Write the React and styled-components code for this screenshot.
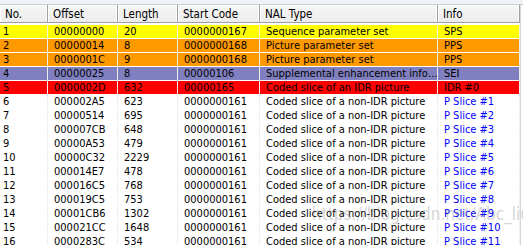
import React from 'react';
import styled, { createGlobalStyle } from 'styled-components';

const GlobalStyle = createGlobalStyle`
  html, body {
    margin: 0;
    padding: 0;
    background: #ffffff;
    overflow: hidden;
  }
  body {
    font-family: "DejaVu Sans Condensed", "Liberation Sans", Arial, sans-serif;
    font-size: 11px;
  }
`;

const columns = [
  { key: 'no', label: 'No.', width: 48 },
  { key: 'offset', label: 'Offset', width: 70 },
  { key: 'length', label: 'Length', width: 60 },
  { key: 'start', label: 'Start Code', width: 82 },
  { key: 'type', label: 'NAL Type', width: 178 },
  { key: 'info', label: 'Info', width: 82 },
];

const SLICE = 'Coded slice of a non-IDR picture';

const nalUnits = [
  { no: 1, offset: '00000000', length: 20, start: '0000000167', type: 'Sequence parameter set', info: 'SPS', tone: 'sps' },
  { no: 2, offset: '00000014', length: 8, start: '0000000168', type: 'Picture parameter set', info: 'PPS', tone: 'pps' },
  { no: 3, offset: '0000001C', length: 9, start: '0000000168', type: 'Picture parameter set', info: 'PPS', tone: 'pps' },
  { no: 4, offset: '00000025', length: 8, start: '00000106', type: 'Supplemental enhancement info…', info: 'SEI', tone: 'sei' },
  { no: 5, offset: '0000002D', length: 632, start: '00000165', type: 'Coded slice of an IDR picture', info: 'IDR #0', tone: 'idr' },
  { no: 6, offset: '000002A5', length: 623, start: '0000000161', type: SLICE, info: 'P Slice #1', tone: 'slice' },
  { no: 7, offset: '00000514', length: 695, start: '0000000161', type: SLICE, info: 'P Slice #2', tone: 'slice' },
  { no: 8, offset: '000007CB', length: 648, start: '0000000161', type: SLICE, info: 'P Slice #3', tone: 'slice' },
  { no: 9, offset: '00000A53', length: 479, start: '0000000161', type: SLICE, info: 'P Slice #4', tone: 'slice' },
  { no: 10, offset: '00000C32', length: 2229, start: '0000000161', type: SLICE, info: 'P Slice #5', tone: 'slice' },
  { no: 11, offset: '000014E7', length: 478, start: '0000000161', type: SLICE, info: 'P Slice #6', tone: 'slice' },
  { no: 12, offset: '000016C5', length: 768, start: '0000000161', type: SLICE, info: 'P Slice #7', tone: 'slice' },
  { no: 13, offset: '000019C5', length: 753, start: '0000000161', type: SLICE, info: 'P Slice #8', tone: 'slice' },
  { no: 14, offset: '00001CB6', length: 1302, start: '0000000161', type: SLICE, info: 'P Slice #9', tone: 'slice' },
  { no: 15, offset: '000021CC', length: 1648, start: '0000000161', type: SLICE, info: 'P Slice #10', tone: 'slice' },
  { no: 16, offset: '0000283C', length: 534, start: '0000000161', type: SLICE, info: 'P Slice #11', tone: 'slice' },
];

const toneColors = {
  sps: '#ffff00',
  pps: '#ff9900',
  sei: '#8080c0',
  idr: '#ff0000',
  slice: '#ffffff',
};

const gridTemplate = columns.map(c => `${c.width}px`).join(' ');

const App = () => (
  <>
    <GlobalStyle />
    <Window>
      <TitleStrip />
      <ListView>
        <HeaderRow>
          {columns.map(col => (
            <HeaderCell key={col.key}>{col.label}</HeaderCell>
          ))}
        </HeaderRow>
        <Body>
          {nalUnits.map(unit => (
            <Row key={unit.no} $bg={toneColors[unit.tone]}>
              {columns.map(col => (
                <Cell key={col.key} $blue={col.key === 'info' && unit.tone === 'slice'}>
                  {unit[col.key]}
                </Cell>
              ))}
            </Row>
          ))}
        </Body>
        <Watermark>https://blog.csdn.net/Abc_liu</Watermark>
      </ListView>
    </Window>
  </>
);

const Window = styled.div`
  width: 523px;
  height: 245px;
  display: flex;
  flex-direction: column;
  background: #ffffff;
  overflow: hidden;
`;

const TitleStrip = styled.div`
  height: 4px;
  flex-shrink: 0;
  background: #eef1f6;
  border-bottom: 1px solid #c9ced6;
`;

const ListView = styled.div`
  position: relative;
  flex: 1;
  width: 520px;
  border-right: 1px solid #d6d6d6;
`;

const HeaderRow = styled.div`
  display: grid;
  grid-template-columns: ${gridTemplate};
  height: 17px;
  background: linear-gradient(#f7f7f7, #ececec);
  border-bottom: 1px solid #a0a0a0;
`;

const HeaderCell = styled.div`
  display: flex;
  align-items: center;
  padding-left: 5px;
  color: #000000;
  font-size: 11.5px;
  border-right: 1px solid #a0a0a0;
  box-shadow: inset -1px 0 0 #ffffff, inset 1px 1px 0 #ffffff;
  white-space: nowrap;
  overflow: hidden;
`;

const Body = styled.div`
  padding-top: 2px;
`;

const Row = styled.div`
  display: grid;
  grid-template-columns: ${gridTemplate};
  height: 13px;
  background: ${p => p.$bg};
  border-bottom: 1px solid #ffffff;
`;

const Cell = styled.div`
  display: flex;
  align-items: center;
  padding-left: 6px;
  color: ${p => (p.$blue ? '#0000ff' : '#000000')};
  line-height: 13px;
  white-space: nowrap;
  overflow: hidden;
  border-right: 1px solid #eeeeee;

  &:first-child {
    padding-left: 3px;
  }
`;

const Watermark = styled.div`
  position: absolute;
  left: 312px;
  top: 199px;
  font-size: 17px;
  color: rgba(110, 110, 110, 0.3);
  white-space: nowrap;
  pointer-events: none;
`;

export default App;
